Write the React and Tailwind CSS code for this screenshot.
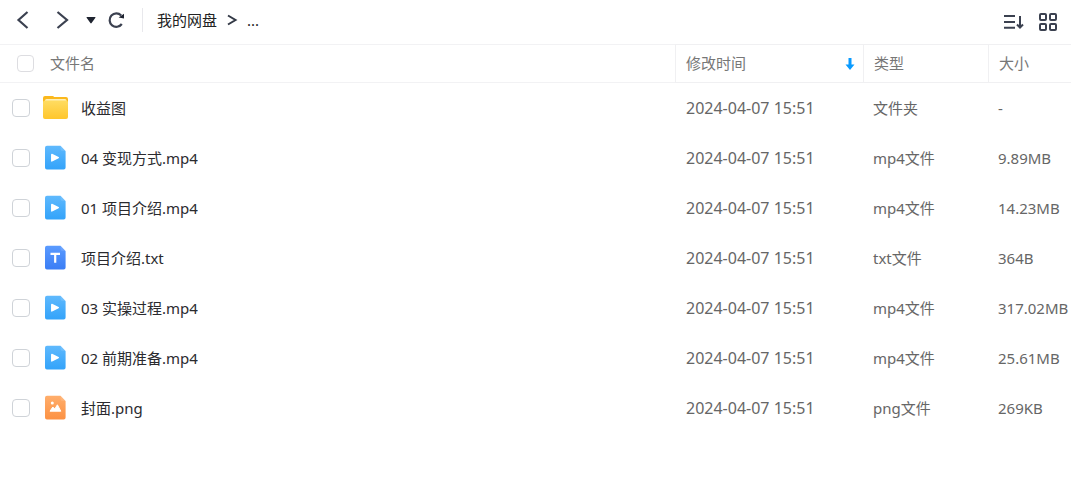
import { useState } from 'react';

const files = [
  { name: '收益图', time: '2024-04-07 15:51', type: '文件夹', size: '-', kind: 'folder' },
  { name: '04 变现方式.mp4', time: '2024-04-07 15:51', type: 'mp4文件', size: '9.89MB', kind: 'video' },
  { name: '01 项目介绍.mp4', time: '2024-04-07 15:51', type: 'mp4文件', size: '14.23MB', kind: 'video' },
  { name: '项目介绍.txt', time: '2024-04-07 15:51', type: 'txt文件', size: '364B', kind: 'text' },
  { name: '03 实操过程.mp4', time: '2024-04-07 15:51', type: 'mp4文件', size: '317.02MB', kind: 'video' },
  { name: '02 前期准备.mp4', time: '2024-04-07 15:51', type: 'mp4文件', size: '25.61MB', kind: 'video' },
  { name: '封面.png', time: '2024-04-07 15:51', type: 'png文件', size: '269KB', kind: 'image' },
];

const FolderIcon = () => (
  <svg width="26" height="26" viewBox="0 0 26 26" className="shrink-0" aria-hidden="true">
    <defs>
      <linearGradient id="folder" x1="0" y1="0" x2="0" y2="1">
        <stop offset="0" stopColor="#ffdc62" />
        <stop offset="1" stopColor="#ffc62c" />
      </linearGradient>
    </defs>
    <path d="M1 3a2 2 0 0 1 2-2h7c1 0 1.600.300 2.200 1H24a2 2 0 0 1 2 2V12H1Z" fill="#fbb81c" />
    <path d="M3 5.500a1.500 1.500 0 0 1 1.500-1.500h18.500a1.500 1.500 0 0 1 1.500 1.500V8H3Z" fill="#fff0b8" />
    <path d="M1 7.500a2 2 0 0 1 2-2h21a2 2 0 0 1 2 2V22a2 2 0 0 1-2 2H3a2 2 0 0 1-2-2Z" fill="url(#folder)" />
  </svg>
);

const fills = {
  video: ['#5fb9fd', '#33a3fa'],
  text: ['#5b9bff', '#3a7df5'],
  image: ['#ffae6c', '#fc9143'],
};

const FileIcon = ({ kind }) => {
  if (kind === 'folder') return <FolderIcon />;
  return (
    <svg width="26" height="26" viewBox="0 0 26 26" className="shrink-0" aria-hidden="true">
      <defs>
        <linearGradient id={kind} x1="0" y1="0" x2="0" y2="1">
          <stop offset="0" stopColor={fills[kind][0]} />
          <stop offset="1" stopColor={fills[kind][1]} />
        </linearGradient>
      </defs>
      <path d="M5 .7h13.500l5.100 5.300V22.500a2 2 0 0 1-2 2H5a2 2 0 0 1-2-2V2.700a2 2 0 0 1 2-2Z" fill={`url(#${kind})`} />
      <path d="M18.500.7 23.600 6H20.500a2 2 0 0 1-2-2Z" fill="#fff" opacity=".12" />
      {kind === 'video' && (
        <path d="M9.800 9.500v6.400l6.500-3.200Z" fill="#fff" stroke="#fff" strokeWidth="1.500" strokeLinejoin="round" />
      )}
      {kind === 'text' && <path d="M8.500 8.800h9.500M13.200 8.800v9" fill="none" stroke="#fff" strokeWidth="2.200" />}
      {kind === 'image' && (
        <g fill="#fff">
          <circle cx="10.300" cy="8" r="1.500" />
          <path d="m8 16.200 2.800-4.200 2 2 2.600-4.200 3.400 6.400Z" stroke="#fff" strokeLinejoin="round" />
        </g>
      )}
    </svg>
  );
};

const Chevron = ({ d }) => (
  <svg width="20" height="20" viewBox="0 0 20 20" fill="none" stroke="#3b4150" strokeWidth="2.200">
    <path d={d} />
  </svg>
);

const Toolbar = () => (
  <header className="flex h-11 items-center justify-between pb-1 pl-3 pr-[13px]">
    <nav className="flex items-center">
      <button aria-label="后退">
        <Chevron d="M15.500 2 6.500 10l9 8" />
      </button>
      <button aria-label="前进" className="ml-5">
        <Chevron d="M5.500 2 15 10l-9.500 8" />
      </button>
      <button aria-label="历史记录" className="ml-2.5">
        <svg width="16" height="16" viewBox="0 0 16 16">
          <path d="M5 5h8a.5.5 0 0 1 .4.800L9.600 11a.7.7 0 0 1-1.200 0L4.600 5.800A.5.5 0 0 1 5 5Z" fill="#1f2430" />
        </svg>
      </button>
      <button aria-label="刷新" className="ml-2">
        <svg width="20" height="20" viewBox="0 0 20 20" fill="none">
          <path d="M15.800 14A6.700 6.700 0 1 1 15.200 5.500" stroke="#3b4150" strokeWidth="2.200" />
          <path d="M12.600 7.400 18 3.700V8.500Z" fill="#1f2430" />
        </svg>
      </button>
      <div className="ml-4 h-6 w-px bg-[#e8e8ec]" />
      <a href="#root" className="ml-3.5 leading-5 text-[#222]">我的网盘</a>
      <span className="ml-2 flex" aria-hidden="true">
        <svg width="14" height="14" viewBox="0 0 14 14" fill="none" stroke="#333946" strokeWidth="2">
          <path d="M3 2.500 10.500 7 3 11.500" />
        </svg>
      </span>
      <a href="#current" className="ml-2 leading-5 text-[#222]">...</a>
    </nav>
    <div className="flex items-center gap-3.5 pt-1">
      <button aria-label="排序">
        <svg width="22" height="20" viewBox="0 0 22 20" fill="none" stroke="#3b4150" strokeWidth="2">
          <path d="M2 4h11M2 10h11M2 15.700h11M18 4v11" />
          <path d="m15 12.500 3 3 3-3" />
        </svg>
      </button>
      <button aria-label="网格视图">
        <svg width="20" height="20" viewBox="0 0 20 20" fill="none" stroke="#3b4150" strokeWidth="2">
          <rect x="2" y="2" width="6" height="6" rx="1" />
          <rect x="12" y="2" width="6" height="6" rx="1" />
          <rect x="2" y="12" width="6" height="6" rx="1" />
          <rect x="12" y="12" width="6" height="6" rx="1" />
        </svg>
      </button>
    </div>
  </header>
);

export default function App() {
  const [selected, setSelected] = useState([]);

  const toggle = (name) => {
    setSelected(selected.includes(name) ? selected.filter((n) => n !== name) : [...selected, name]);
  };

  const toggleAll = () => {
    setSelected(selected.length === files.length ? [] : files.map((f) => f.name));
  };

  return (
    <div className="min-h-screen overflow-x-hidden bg-white font-['Noto_Sans','Noto_Sans_CJK_SC',sans-serif] text-[15px] text-[#666]">
      <Toolbar />
      <table className="w-full table-fixed border-separate border-spacing-0 text-left">
        <colgroup>
          <col />
          <col className="w-[188px]" />
          <col className="w-[125px]" />
          <col className="w-[83px]" />
        </colgroup>
        <thead>
          <tr className="h-[39px] text-[#777]">
            <th className="border-y border-[#f2f2f4] p-0 pl-[17px] font-normal">
              <div className="flex items-center gap-4">
                <input
                  type="checkbox"
                  aria-label="全选"
                  checked={selected.length === files.length}
                  onChange={toggleAll}
                  className="size-[17px] appearance-none rounded border border-[#dddde1] bg-white checked:bg-[#06a7ff]"
                />
                <span>文件名</span>
              </div>
            </th>
            <th className="border-y border-l border-[#f0f0f2] p-0 pl-2.5 pr-2 font-normal">
              <button className="flex w-full items-center justify-between">
                修改时间
                <svg width="10" height="14" viewBox="0 0 10 14" fill="#0a9bff" aria-hidden="true">
                  <path d="M3.500 1h3v6.500h3L5 13 .5 7.500h3Z" />
                </svg>
              </button>
            </th>
            <th className="border-y border-l border-[#f0f0f2] p-0 pl-2.5 font-normal">类型</th>
            <th className="border-y border-l border-[#f0f0f2] p-0 pl-2.5 font-normal">大小</th>
          </tr>
        </thead>
        <tbody>
          {files.map((file) => (
            <tr key={file.name} className="h-[50px] whitespace-nowrap">
              <td className="p-0 pl-3">
                <label className="flex items-center text-[#2b2b2f]">
                  <input
                    type="checkbox"
                    checked={selected.includes(file.name)}
                    onChange={() => toggle(file.name)}
                    className="size-[18px] shrink-0 appearance-none rounded border border-[#cfd3d8] bg-white checked:bg-[#06a7ff]"
                  />
                  <span className="ml-3 mr-[13px]">
                    <FileIcon kind={file.kind} />
                  </span>
                  <span className="truncate">{file.name}</span>
                </label>
              </td>
              <td className="p-0 pl-[11px] text-base">{file.time}</td>
              <td className="p-0 pl-2.5">{file.type}</td>
              <td className="p-0 pl-2.5">{file.size}</td>
            </tr>
          ))}
        </tbody>
      </table>
    </div>
  );
}
